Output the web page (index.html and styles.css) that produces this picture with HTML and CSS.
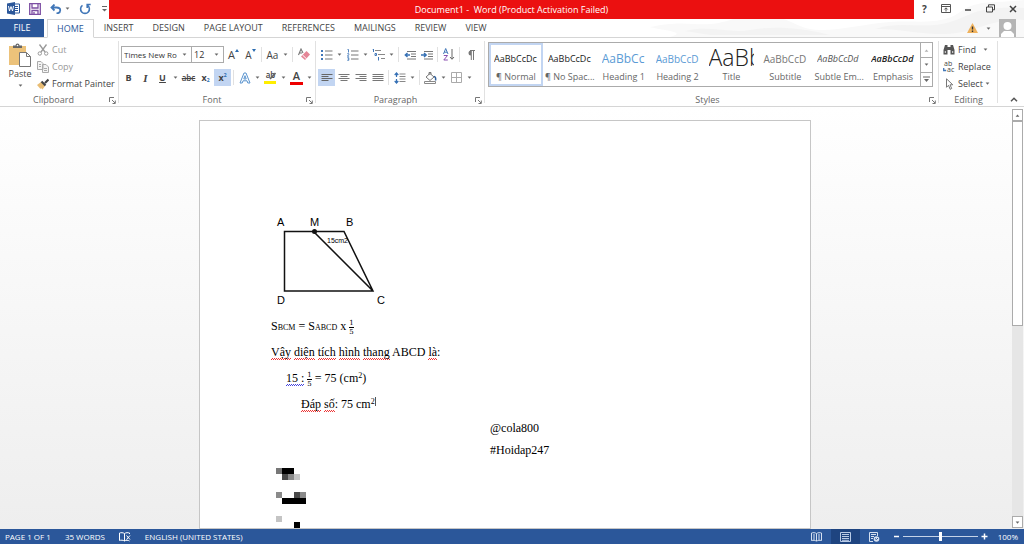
FILE: index.html
```html
<!DOCTYPE html>
<html lang="en">
<head>
<meta charset="utf-8">
<title>Document1 - Word (Product Activation Failed)</title>
<link rel="stylesheet" href="styles.css">
</head>
<body>
<svg class="sprite" aria-hidden="true">
  <symbol id="caret" viewBox="0 0 6 4"><path d="M.5.5h5L3 3.5z" fill="#666"/></symbol>
  <symbol id="launch" viewBox="0 0 7 7"><path d="M.5 5V.5H5M3 3l3 3M6.300 3.500v3H3.500" fill="none" stroke="#777"/></symbol>
  <symbol id="list" viewBox="0 0 12 12"><path d="M4 2h7.500M4 6h7.500M4 10h7.500" stroke="#777" fill="none"/></symbol>
</svg>
<div class="app">
<header class="top">
  <svg class="swirl" viewBox="0 0 374 37" preserveAspectRatio="none" aria-hidden="true">
    <path d="M0 27C40 18 50 30 80 20S130 16 150 26 210 24 240 22 290 26 310 12 350 4 374 0V37H20C40 32 10 30 0 27z" fill="#f9f9f9"/>
    <path d="M35 31C60 25 80 34 100 30S150 27 180 35H60zM225 29C250 20 275 30 300 22S325 6 374 8V20C340 18 325 34 295 34S245 28 225 29z" fill="#f3f3f3"/>
  </svg>
  <div class="titlebar">
    <div class="quick">
      <svg width="13" height="13" viewBox="0 0 13 13"><path d="M7 2h5.500v9H7" fill="#fff" stroke="#2b579a"/><path d="M8 4.500h3M8 6.500h3M8 8.500h3" stroke="#2b579a"/><path d="M0 1.500 8 0v13L0 11.500z" fill="#2b579a"/><path d="m1.500 4 1 5 1.500-4.500L5.500 9l1-5" fill="none" stroke="#fff"/></svg>
      <button aria-label="Save"><svg width="12" height="12" viewBox="0 0 12 12"><path d="M.7.7h10.600v10.600H.7zM3 .7V5h6V.7M3 11V7.500h6V11M5 9v2" fill="none" stroke="#7d4fa3" stroke-width="1.300"/></svg></button>
      <button class="undo" aria-label="Undo"><svg width="12" height="10" viewBox="0 0 12 10"><path d="M1.500 3.500h5c5 0 5 5.500 0 6M4.500.5l-3 3 3 3" fill="none" stroke="#4177b8" stroke-width="1.800"/></svg><svg class="caret"><use href="#caret"/></svg></button>
      <button aria-label="Repeat"><svg width="12" height="12" viewBox="0 0 12 12"><path d="M3.500 2.400a4.400 4.400 0 1 0 5 0M8.200 5V1.500h3.500" fill="none" stroke="#4177b8" stroke-width="1.600"/></svg></button>
      <button class="custom" aria-label="Customize toolbar"><svg width="5" height="6" viewBox="0 0 5 6"><path d="M0 .5h5" stroke="#666"/><path d="M0 3h5L2.500 5.500z" fill="#666"/></svg></button>
    </div>
    <h1 class="title">Document1 -&nbsp; Word (Product Activation Failed)</h1>
    <div class="window">
      <button class="help" aria-label="Help">?</button>
      <button aria-label="Ribbon display options"><svg width="10" height="9" viewBox="0 0 10 9"><path d="M.5.5h9v8h-9zM.5 2.500h9M5 7.500V4M3.300 5.500 5 3.800l1.700 1.700" fill="none" stroke="#555"/></svg></button>
      <button aria-label="Minimize"><svg width="8" height="8" viewBox="0 0 8 8"><path d="M1 5h6" stroke="#444" stroke-width="1.500"/></svg></button>
      <button aria-label="Restore"><svg width="9" height="9" viewBox="0 0 9 9"><path d="M2.500 3V.8h6v5H6.500M.5 3h6v5h-6z" fill="none" stroke="#444"/></svg></button>
      <button aria-label="Close"><svg width="8" height="8" viewBox="0 0 8 8"><path d="m1 1 6 6m0-6L1 7" stroke="#444" stroke-width="1.500"/></svg></button>
    </div>
  </div>
  <nav class="tabs">
    <button class="file">FILE</button>
    <button class="tab current">HOME</button>
    <button class="tab">INSERT</button>
    <button class="tab">DESIGN</button>
    <button class="tab">PAGE LAYOUT</button>
    <button class="tab">REFERENCES</button>
    <button class="tab">MAILINGS</button>
    <button class="tab">REVIEW</button>
    <button class="tab">VIEW</button>
    <div class="account">
      <svg width="11" height="10" viewBox="0 0 11 10"><path d="M5.500 0 11 10H0z" fill="#efb25d"/><path d="M5.500 3.500v3M5.500 7.500V9" stroke="#333" stroke-width="1.400"/></svg>
      <svg class="caret"><use href="#caret"/></svg>
      <svg width="17" height="18" viewBox="0 0 17 18"><path d="M0 0h17v18H0z" fill="#b5b5b5"/><circle cx="8.500" cy="7" r="4" fill="#fff"/><path d="M2 18v-3l3-3h7l3 3v3z" fill="#fff"/></svg>
    </div>
  </nav>
</header>

<section class="ribbon">
  <div class="group clipboard">
    <div class="body">
      <button class="paste"><svg width="24" height="24" viewBox="0 0 24 24"><path d="M1 3h17v19H1z" fill="#ecc27a"/><path d="M5 5V2.500h2.500a2 2 0 0 1 4 0H14V5z" fill="#666"/><circle cx="9.500" cy="2.500" r=".8" fill="#fff"/><path d="M11.500 9.500h7l4 4v10h-11z" fill="#fff" stroke="#777"/><path d="M18.500 9.500v4h4" fill="none" stroke="#777"/></svg><span>Paste</span><svg class="caret"><use href="#caret"/></svg></button>
      <div class="stack">
        <button class="off"><svg width="12" height="12" viewBox="0 0 12 12"><path d="M2.500.5 8 8M9.500.5 4 8" stroke="#999" stroke-width="1.300"/><circle cx="2.800" cy="9.500" r="1.700" fill="none" stroke="#999"/><circle cx="9.200" cy="9.500" r="1.700" fill="none" stroke="#999"/></svg>Cut</button>
        <button class="off"><svg width="12" height="12" viewBox="0 0 12 12"><path d="M.5.5H4l2 2v6H.5zM5.500 3.500H9l2.500 2.500v5.500h-6z" fill="#f4f4f4" stroke="#aaa"/><path d="M2 3.500h2M2 5.500h2M7 7.500h3M7 9.500h3" stroke="#aaa"/></svg>Copy</button>
        <button><svg width="12" height="12" viewBox="0 0 12 12"><path d="m0 7 4-3 4 4-2.500 3.500L4 10l-.5 1z" fill="#e9bd74"/><path d="m4.500 3.500 4 4M8 5l3.500-3.500" stroke="#444" stroke-width="2.200"/></svg>Format Painter</button>
      </div>
    </div>
    <footer class="caption">Clipboard<button class="launch" aria-label="Clipboard options"><svg width="7" height="7"><use href="#launch"/></svg></button></footer>
  </div>

  <div class="group font">
    <div class="body rows">
      <div class="row">
        <label class="combo family"><select aria-label="Font"><option>Times New Ro</option></select><svg class="caret"><use href="#caret"/></svg></label>
        <label class="combo size"><select aria-label="Font size"><option>12</option></select><svg class="caret"><use href="#caret"/></svg></label>
        <button class="tool big" aria-label="Grow font">A<svg width="4" height="3" viewBox="0 0 4 3"><path d="M0 3h4L2 0z" fill="#2b6cb0"/></svg></button>
        <button class="tool small" aria-label="Shrink font">A<svg width="4" height="3" viewBox="0 0 4 3"><path d="M0 0h4L2 3z" fill="#2b6cb0"/></svg></button>
        <span class="sep"></span>
        <button class="tool case">Aa</button><button class="drop" aria-label="Case options"><svg class="caret"><use href="#caret"/></svg></button>
        <span class="sep"></span>
        <button class="tool" aria-label="Clear formatting"><svg width="13" height="13" viewBox="0 0 13 13"><path d="m1.500 7 2.500-6 2 4M2.300 5H5" fill="none" stroke="#777" stroke-width="1.100"/><path d="M9.500 3 13 6.500 8 12 4 8.500z" fill="#e58596"/><path d="m5.500 7 4 3.800" stroke="#fff"/></svg></button>
      </div>
      <div class="row">
        <button class="tool bold">B</button>
        <button class="tool italic">I</button>
        <button class="tool under">U</button><button class="drop" aria-label="Underline options"><svg class="caret"><use href="#caret"/></svg></button>
        <button class="tool strike">abc</button>
        <button class="tool bold">x<sub>2</sub></button>
        <button class="tool bold on">x<sup>2</sup></button>
        <span class="sep"></span>
        <button class="tool" aria-label="Text effects"><svg width="12" height="12" viewBox="0 0 12 12"><path d="M1 11 5 1h2l4 10H8.800L8 8.800H4L3.200 11zM4.800 7h2.400L6 3.700z" fill="#fff" stroke="#5a94cf"/></svg></button><button class="drop" aria-label="Effect options"><svg class="caret"><use href="#caret"/></svg></button>
        <button class="tool marker" aria-label="Highlight">ab<svg width="12" height="12" viewBox="0 0 12 12"><path d="M0 9h12v3H0z" fill="#ffee00"/><path d="m6 7 5.500-6" stroke="#666" stroke-width="1.700"/></svg></button><button class="drop" aria-label="Highlight options"><svg class="caret"><use href="#caret"/></svg></button>
        <button class="tool ink" aria-label="Font color">A</button><button class="drop" aria-label="Color options"><svg class="caret"><use href="#caret"/></svg></button>
      </div>
    </div>
    <footer class="caption">Font<button class="launch" aria-label="Font options"><svg width="7" height="7"><use href="#launch"/></svg></button></footer>
  </div>

  <div class="group paragraph">
    <div class="body rows">
      <div class="row">
        <button class="tool" aria-label="Bullets"><svg width="12" height="12" viewBox="0 0 12 12"><use href="#list"/><path d="M0 1h2v2H0zM0 5h2v2H0zM0 9h2v2H0z" fill="#4177b8"/></svg></button><button class="drop" aria-label="Bullet options"><svg class="caret"><use href="#caret"/></svg></button>
        <button class="tool" aria-label="Numbering"><svg width="12" height="12" viewBox="0 0 12 12"><use href="#list"/><path d="M.5.500h1v3M.3 4.700h1.500v1L.3 7.200h1.800M.3 8.700h1.500v2.600H.3M.8 10h1" fill="none" stroke="#4177b8" stroke-width=".9"/></svg></button><button class="drop" aria-label="Numbering options"><svg class="caret"><use href="#caret"/></svg></button>
        <button class="tool" aria-label="Multilevel list"><svg width="13" height="12" viewBox="0 0 13 12"><path d="M3 1.500h6M6 5.500h7M9 9.500h4" stroke="#888"/><path d="M.5 0h1v3M3 4.500h1.500v2H3zM6.500 8v3.500" fill="none" stroke="#4177b8"/></svg></button><button class="drop" aria-label="Multilevel options"><svg class="caret"><use href="#caret"/></svg></button>
        <span class="sep"></span>
        <button class="tool" aria-label="Decrease indent"><svg width="12" height="10" viewBox="0 0 12 10"><path d="M3 1.500h9M7 4h5M7 6.500h5M3 9h9" stroke="#777"/><path d="M6 5H1.500M3.500 3 1.300 5l2.200 2" fill="none" stroke="#3570b5" stroke-width="1.400"/></svg></button>
        <button class="tool" aria-label="Increase indent"><svg width="12" height="10" viewBox="0 0 12 10"><path d="M3 1.500h9M7 4h5M7 6.500h5M3 9h9" stroke="#777"/><path d="M0 5h5M3 3l2.200 2L3 7" fill="none" stroke="#3570b5" stroke-width="1.400"/></svg></button>
        <span class="sep"></span>
        <button class="tool" aria-label="Sort"><svg width="12" height="13" viewBox="0 0 12 13"><path d="m.5 6 2.200-5.500L5 6M1.300 4.200H4" fill="none" stroke="#4177b8"/><path d="M.8 7.500h3.700L.8 12h4" fill="none" stroke="#8a4fb0"/><path d="M9 1v10M7 9l2 2.300L11 9" fill="none" stroke="#666"/></svg></button>
        <span class="sep"></span>
        <button class="tool" aria-label="Show paragraph marks"><svg width="8" height="10" viewBox="0 0 8 10"><path d="M4 .5a2.500 2.500 0 0 0 0 5z" fill="#777"/><path d="M3 .5h5M4.300.5V10M6.500.5V10" stroke="#777"/></svg></button>
      </div>
      <div class="row">
        <button class="tool on" aria-label="Align left"><svg width="12" height="10" viewBox="0 0 12 10"><path d="M.5 1.500h11M.5 3.500h7M.5 5.500h11M.5 7.500h7" stroke="#666"/></svg></button>
        <button class="tool" aria-label="Center"><svg width="12" height="10" viewBox="0 0 12 10"><path d="M.5 1.500h11M2.500 3.500h7M.5 5.500h11M2.500 7.500h7" stroke="#777"/></svg></button>
        <button class="tool" aria-label="Align right"><svg width="12" height="10" viewBox="0 0 12 10"><path d="M.5 1.500h11M4.500 3.500h7M.5 5.500h11M4.500 7.500h7" stroke="#777"/></svg></button>
        <button class="tool" aria-label="Justify"><svg width="12" height="10" viewBox="0 0 12 10"><path d="M.5 1.500h11M.5 3.500h11M.5 5.500h11M.5 7.500h11" stroke="#777"/></svg></button>
        <span class="sep"></span>
        <button class="tool" aria-label="Line spacing"><svg width="12" height="12" viewBox="0 0 12 12"><path d="M5.500 2h6M5.500 4.500h6M5.500 7h6M5.500 9.500h6" stroke="#888"/><path d="M2.500 1v4M.7 3 2.500 1l1.800 2M2.500 7v4M.7 9l1.800 2 1.800-2" fill="none" stroke="#3570b5" stroke-width="1.200"/></svg></button><button class="drop" aria-label="Spacing options"><svg class="caret"><use href="#caret"/></svg></button>
        <span class="sep"></span>
        <button class="tool" aria-label="Shading"><svg width="13" height="12" viewBox="0 0 13 12"><path d="m2 5 4-3.500L10 5 6 8.500zM5 3V.5h2v2" fill="#fff" stroke="#777"/><path d="M10 4.500c1.500 0 2 2 1.500 4" stroke="#2f5f9a" stroke-width="1.500" fill="none"/><path d="M.5 9.500h11v2H.5z" fill="#fff" stroke="#888"/></svg></button><button class="drop" aria-label="Shading options"><svg class="caret"><use href="#caret"/></svg></button>
        <button class="tool" aria-label="Borders"><svg width="11" height="11" viewBox="0 0 11 11"><path d="M.5.5h10v10H.5zM5.500.5v10M.5 5.500h10" fill="none" stroke="#aaa"/></svg></button><button class="drop" aria-label="Border options"><svg class="caret"><use href="#caret"/></svg></button>
      </div>
    </div>
    <footer class="caption">Paragraph<button class="launch" aria-label="Paragraph options"><svg width="7" height="7"><use href="#launch"/></svg></button></footer>
  </div>

  <div class="group styles">
    <div class="gallery">
      <button class="style chosen"><span class="sample">AaBbCcDc</span><span class="name">¶ Normal</span></button>
      <button class="style"><span class="sample">AaBbCcDc</span><span class="name">¶ No Spac...</span></button>
      <button class="style"><span class="sample head1">AaBbCc</span><span class="name">Heading 1</span></button>
      <button class="style"><span class="sample head2">AaBbCcD</span><span class="name">Heading 2</span></button>
      <button class="style"><span class="sample display">AaBb</span><span class="name">Title</span></button>
      <button class="style"><span class="sample subtitle">AaBbCcD</span><span class="name">Subtitle</span></button>
      <button class="style"><span class="sample subtle">AaBbCcDd</span><span class="name">Subtle Em...</span></button>
      <button class="style"><span class="sample emphasis">AaBbCcDd</span><span class="name">Emphasis</span></button>
      <div class="pager">
        <button aria-label="Previous styles" disabled><svg class="caret flip"><use href="#caret"/></svg></button>
        <button aria-label="Next styles"><svg class="caret"><use href="#caret"/></svg></button>
        <button aria-label="All styles"><svg width="7" height="7" viewBox="0 0 7 7"><path d="M0 1h7" stroke="#666"/><path d="M1 3h5L3.500 6z" fill="#666"/></svg></button>
      </div>
    </div>
    <footer class="caption">Styles<button class="launch" aria-label="Style options"><svg width="7" height="7"><use href="#launch"/></svg></button></footer>
  </div>

  <div class="group editing">
    <div class="stack">
      <button><svg width="12" height="11" viewBox="0 0 12 11"><path d="M2 1h2.500v2H7.500V1H10l1.500 5v4.500h-4V6h-3v4.500h-4V6z" fill="#555"/><path d="M2.300 7v2M9.700 7v2" stroke="#ddd"/></svg>Find<svg class="caret far"><use href="#caret"/></svg></button>
      <button><span class="swap"><svg width="12" height="12" viewBox="0 0 12 12"><path d="M.7 7v2.500h2.500" fill="none" stroke="#4177b8" stroke-width="1.300"/></svg><span>ab</span><span>ac</span></span>Replace</button>
      <button><svg width="12" height="12" viewBox="0 0 12 12"><path d="M3.500.8v8.500l2-2 1.700 4 1.500-.8L7 6.800h2.800z" fill="#fff" stroke="#777"/></svg>Select<svg class="caret"><use href="#caret"/></svg></button>
    </div>
    <footer class="caption">Editing</footer>
  </div>
  <div class="collapse"><button aria-label="Collapse ribbon"><svg width="8" height="5" viewBox="0 0 8 5"><path d="m1 4.300 3-3 3 3" fill="none" stroke="#555" stroke-width="1.500"/></svg></button></div>
</section>

<main class="workspace">
  <div class="desk">
    <article class="sheet">
      <svg class="figure" width="120" height="94" viewBox="0 0 120 94" role="img" aria-label="Trapezoid ABCD">
        <path d="M13.500 16.500H73L102 76H13.500zM43 17l59 59" fill="none" stroke="#111" stroke-width="1.500"/>
        <circle cx="43.500" cy="16.500" r="2.500" fill="#111"/>
        <text x="6" y="11">A</text><text x="39" y="11">M</text><text x="75" y="11">B</text>
        <text x="6" y="89">D</text><text x="106" y="89">C</text>
        <text class="area" x="56" y="28">15cm2</text>
      </svg>
      <p class="line">S<small>BCM</small> = S<small>ABCD</small> x <span class="frac"><span>1</span><span>5</span></span></p>
      <p class="line"><span class="typo">Vậy</span> <span class="typo">diện</span> <span class="typo">tích</span> <span class="typo">hình</span> <span class="typo">thang</span> ABCD <span class="typo">là</span>:</p>
      <p class="line in1"><span class="grammar">15 :</span> <span class="frac"><span>1</span><span>5</span></span> = 75 (cm<sup>2</sup>)</p>
      <p class="line in2"><span class="typo">Đáp</span> <span class="typo">số</span>: 75 cm<sup class="cursor">2</sup></p>
      <p class="line sign">@cola800</p>
      <p class="line sign">#Hoidap247</p>
      <svg class="mosaic" width="30" height="60" viewBox="0 0 30 60" shape-rendering="crispEdges" aria-hidden="true">
        <path d="M6 0h12v6H6zM6 30h24v6H6zM18 54h6v6h-6z" fill="#000"/>
        <path d="M0 0h6v6H0z" fill="#777"/><path d="M6 6h6v6H6zM18 24h6v6h-6z" fill="#4a4a4a"/>
        <path d="M12 6h6v6h-6zM0 24h6v6H0zM24 24h6v6h-6z" fill="#8a8a8a"/>
        <path d="M18 6h6v6h-6zM0 48h6v6H0z" fill="#c4c4c4"/>
      </svg>
    </article>
  </div>
  <div class="scroll">
    <button aria-label="Scroll up"><svg class="caret flip"><use href="#caret"/></svg></button>
    <div class="track"><div class="thumb"></div></div>
    <button aria-label="Scroll down"><svg class="caret"><use href="#caret"/></svg></button>
  </div>
</main>

<footer class="status">
  <span>PAGE 1 OF 1</span>
  <span>35 WORDS</span>
  <button aria-label="Proofing errors"><svg width="12" height="10" viewBox="0 0 12 10"><path d="M5.500 1.500C4 .5 2 .5.500 1v7.500c1.500-.5 3.500-.5 5 .5zM5.500 1.500C7 .5 9 .5 10.500 1v1M5.500 9c1.500-1 3.500-1 5 0M7.500 3.500l3.500 4m0-4-3.500 4" fill="none" stroke="#fff"/></svg></button>
  <span>ENGLISH (UNITED STATES)</span>
  <div class="views">
    <button aria-label="Read mode"><svg width="11" height="10" viewBox="0 0 11 10"><path d="M5.500 1.500C4 .5 2 .5.500 1v7.500c2-.5 3.500 0 5 .5 1.500-.5 3-1 5-.5V1c-1.500-.5-3.500-.5-5 .5zM5.500 1.500V9M2 3h2M2 5h2M2 7h2M7 3h2M7 5h2M7 7h2" fill="none" stroke="#d5e0f0"/></svg></button>
    <button class="active" aria-label="Print layout"><svg width="11" height="10" viewBox="0 0 11 10"><path d="M.5.5h10v9H.5zM2 2.500h7M2 4.500h7M2 6.500h7M2 8.300h7" fill="none" stroke="#b9cbe6"/></svg></button>
    <button aria-label="Web layout"><svg width="11" height="10" viewBox="0 0 11 10"><path d="M4 9.500H.5V.5h8V4M2 2.500h5M2 4.500h3M2 6.500h2" fill="none" stroke="#d5e0f0"/><circle cx="7.500" cy="7" r="2.800" fill="#d5e0f0"/><path d="m6 6.500 1.500 1L9 6" fill="none" stroke="#2b579a"/></svg></button>
  </div>
  <div class="zoom">
    <button aria-label="Zoom out"><svg width="7" height="7" viewBox="0 0 7 7"><path d="M1 3.500h5" stroke="#fff" stroke-width="1.500"/></svg></button>
    <input type="range" min="0" max="100" value="50" aria-label="Zoom">
    <button aria-label="Zoom in"><svg width="7" height="7" viewBox="0 0 7 7"><path d="M.5 3.500h6M3.500.5v6" stroke="#fff" stroke-width="1.500"/></svg></button>
  </div>
  <span class="percent">100%</span>
</footer>
</div>
</body>
</html>
```

FILE: styles.css
```css
* { box-sizing: border-box; }
body {
  margin: 0;
  font: 9px/12px "Open Sans", "Noto Sans", sans-serif;
  color: #444;
  background: #fff;
}
button {
  margin: 0;
  padding: 0;
  border: 0;
  background: none;
  color: inherit;
  font: inherit;
  white-space: nowrap;
}
svg { display: block; flex: none; }
.sprite { position: absolute; width: 0; height: 0; }
.caret { width: 5px; height: 3px; }
.flip { transform: rotate(180deg); }
.app { height: 100vh; display: flex; flex-direction: column; overflow: hidden; }

/* title bar and tabs */
.top { position: relative; border-bottom: 1px solid #d5d5d5; }
.swirl { position: absolute; right: 0; top: 0; width: 374px; height: 100%; }
.titlebar { position: relative; display: flex; height: 19px; }
.quick { width: 109px; display: flex; align-items: center; gap: 9px; padding: 0 0 2px 7px; }
.undo { display: flex; align-items: center; gap: 3px; }
.quick .custom { margin-left: auto; padding-right: 2px; }
.title {
  flex: 1;
  margin: 0;
  background: #eb1010;
  color: #fff;
  font-size: 9px;
  font-weight: 400;
  line-height: 19px;
  text-align: center;
}
.window { width: 110px; display: flex; justify-content: space-between; align-items: center; padding: 0 7px 2px 8px; }
.help { font-size: 10px; font-weight: 700; }
.tabs { position: relative; display: flex; gap: 1px; height: 18px; }
.file { width: 44px; background: #2b579a; color: #fff; }
.tab { padding: 0 9px; }
.current { margin: 0 0 -1px 2px; border: 1px solid #d5d5d5; border-bottom-color: #fff; background: #fff; color: #2b579a; }
.account { margin-left: auto; display: flex; align-items: center; gap: 8px; padding-right: 8px; }

/* ribbon */
.ribbon { display: flex; height: 69px; border-bottom: 1px solid #d5d5d5; background: #fff; }
.group { position: relative; display: flex; flex-direction: column; justify-content: space-between; padding: 3px 0 0; }
.group::after { content: ""; position: absolute; right: 0; top: 3px; bottom: 3px; width: 1px; background: #e1e1e1; }
.caption { position: relative; height: 12px; padding-right: 12px; color: #666; text-align: center; line-height: 12px; }
.launch { position: absolute; right: 3px; top: 3px; }
.clipboard { width: 119px; }
.clipboard .body { display: flex; gap: 5px; padding-left: 8px; }
.paste { display: flex; flex-direction: column; align-items: center; padding-top: 2px; color: #444; }
.paste .caret { margin-top: 4px; }
.paste span { margin-top: 1px; }
.stack { display: grid; grid-auto-rows: 17px; }
.stack button { display: flex; align-items: center; gap: 3px; }
.off { color: #999; }
.rows { display: grid; grid-auto-rows: 17px; gap: 6px; padding-top: 5px; }
.row { display: flex; align-items: stretch; }
.font { width: 197px; padding-left: 1px; }
.paragraph { width: 169px; padding-left: 2px; }
.combo { position: relative; border: 1px solid #ababab; }
.combo select { width: 100%; height: 100%; padding: 0 0 0 2px; border: 0; appearance: none; background: none; font: inherit; color: #333; }
.family select { font-size: 8px; }
.combo .caret { position: absolute; right: 4px; top: 6px; }
.family { width: 71px; margin-left: 1px; }
.size { width: 33px; margin-left: -1px; margin-right: 1px; }
.tool { width: 17px; display: flex; align-items: center; justify-content: center; }
.tool.big svg, .tool.small svg { align-self: flex-start; margin-top: 3px; }
.tool.big { font-size: 11px; }
.tool.small, .case { font-size: 10px; }
.drop { width: 9px; display: flex; align-items: center; justify-content: center; }
.sep { width: 1px; margin: 1px 2px; background: #e1e1e1; }
.on { background: #c2d5f2; }
.bold { font-weight: 700; }
.italic { font-style: italic; font-weight: 700; font-family: "Liberation Serif", serif; font-size: 11px; }
.under { font-weight: 700; text-decoration: underline; }
.strike { font-size: 8px; font-weight: 600; text-decoration: line-through; }
.tool sub, .tool sup { font-size: 5px; line-height: 5px; color: #2b6cb0; }
.tool sub { align-self: flex-end; margin-bottom: 3px; }
.tool sup { align-self: flex-start; margin-top: 4px; }
.marker { position: relative; align-items: flex-start; font-size: 8px; font-weight: 600; }
.marker svg { position: absolute; left: 2px; top: 3px; }
.ink { margin: 1px 2px; width: 13px; padding-bottom: 1px; border-bottom: 3px solid #e00; font-size: 11px; font-weight: 600; }

.styles { flex: 1; padding: 4px 6px 0 3px; }
.styles .caption { margin-right: -6px; }
.gallery { display: flex; height: 45px; border: 1px solid #ababab; }
.style { flex: 1; min-width: 0; display: grid; grid-template-rows: 24px 12px; align-content: center; padding: 2px; }
.chosen { border: 2px solid #c2d5f2; padding: 0; }
.sample { overflow: hidden; margin: 0 3px; color: #222; line-height: 24px; text-align: left; }
.name { overflow: hidden; color: #666; }
.head1 { color: #5b9bd5; font-size: 12px; }
.head2 { color: #5b9bd5; font-size: 10px; }
.display { margin: 0 2px; font-size: 23px; font-weight: 300; line-height: 20px; }
.subtitle { color: #777; font-size: 10px; }
.subtle { color: #555; font-style: italic; }
.emphasis { font-style: italic; font-weight: 600; }
.pager { width: 12px; display: grid; grid-template-rows: repeat(3, 1fr); border-left: 1px solid #ababab; }
.pager button { display: grid; place-items: center; }
.pager button + button { border-top: 1px solid #ababab; }
.pager button:disabled { opacity: .5; }
.editing { width: 59px; padding-left: 4px; }
.editing .caret { margin-left: -1px; }
.editing .far { margin-left: 4px; }
.editing .caption { padding-right: 4px; }
.swap { position: relative; width: 12px; font-size: 7px; line-height: 6px; text-align: left; }
.swap svg { position: absolute; left: 0; top: 0; }
.swap span { display: block; padding-left: 1px; }
.swap span + span { padding-left: 4px; }
.collapse { width: 26px; display: flex; align-items: flex-end; justify-content: center; padding: 0 0 4px 5px; }

/* document */
.workspace { flex: 1; min-height: 0; display: flex; background: linear-gradient(#fff, #eee); }
.desk { flex: 1; overflow: hidden; padding-top: 13px; }
.sheet {
  width: 612px;
  max-width: 100%;
  min-height: 100%;
  margin: 0 auto;
  padding: 94px 71px 0;
  border: 1px solid #c6c6c6;
  background: #fff;
  color: #000;
  font: 12px/26px "Liberation Serif", serif;
}
.figure { margin-bottom: 4px; font: 11px "Liberation Sans", sans-serif; }
.figure .area { font-size: 7px; }
.line { height: 26px; margin: 0; white-space: nowrap; }
.line small { font-size: 8px; line-height: 12px; }
.line sup { font-size: 8px; line-height: 8px; vertical-align: 4px; }
.in1 { padding-left: 15px; }
.in2 { padding-left: 30px; }
.sign { height: 22px; padding-left: 219px; line-height: 22px; }
.typo, .grammar {
  --ink: #e33;
  padding-bottom: 1px;
  background:
    repeating-linear-gradient(90deg, var(--ink) 0 1px, transparent 1px 2px) 0 100% / 100% 1px no-repeat,
    repeating-linear-gradient(90deg, transparent 0 1px, var(--ink) 1px 2px) 0 calc(100% - 1px) / 100% 1px no-repeat;
}
.grammar { --ink: #44d; }
.frac { display: inline-grid; vertical-align: middle; font: 7px/8px "DejaVu Serif", serif; }
.frac span + span { border-top: 1px solid #000; }
.cursor { border-right: 1px solid #555; }
.mosaic { margin: 7px 0 0 5px; }
.scroll { width: 14px; display: flex; flex-direction: column; padding: 2px 1px 1px 2px; }
.scroll button { height: 12px; display: grid; place-items: center; border: 1px solid #ababab; background: #fff; }
.track { flex: 1; background: #e6e6e6; }
.thumb { height: 52%; border: 1px solid #ababab; background: #fff; }

/* status bar */
.status { display: flex; align-items: center; height: 15px; padding: 0 6px 0 5px; gap: 14px; background: #2b579a; color: #fff; font-size: 8px; }
.views { margin-left: auto; display: flex; align-self: stretch; }
.views button { width: 29px; display: grid; place-items: center; }
.views .active { background: #1e4480; }
.zoom { display: flex; align-items: center; gap: 3px; margin: 0 -4px 0 -10px; }
.zoom input { width: 75px; height: 11px; margin: 0; appearance: none; background: linear-gradient(#c5d3e8, #c5d3e8) center / 100% 1px no-repeat; }
.zoom input::-webkit-slider-thumb { appearance: none; width: 3px; height: 9px; background: #fff; }
```
